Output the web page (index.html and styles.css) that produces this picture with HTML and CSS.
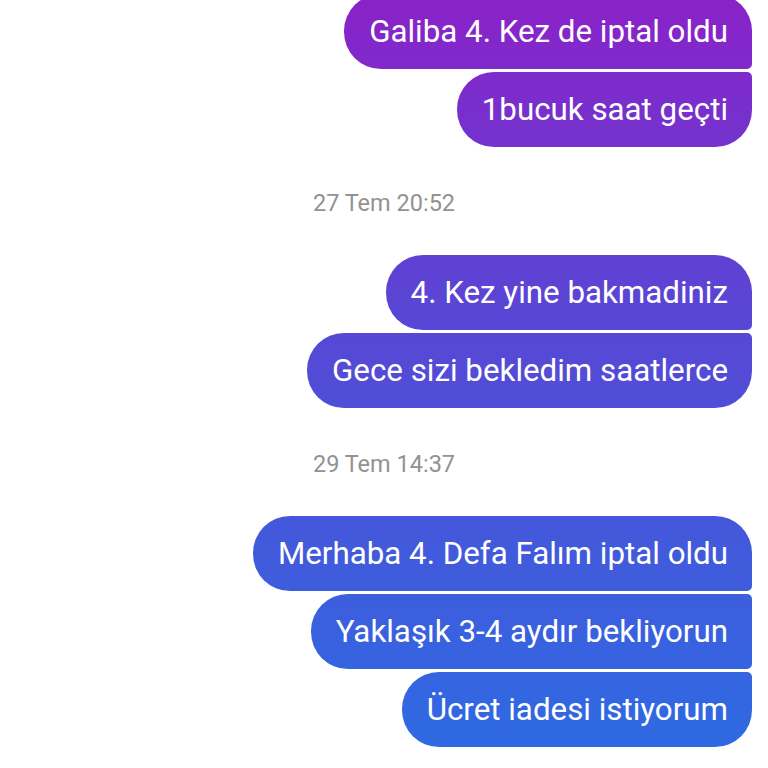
FILE: index.html
```html
<!DOCTYPE html>
<html lang="tr">
<head>
  <meta charset="UTF-8">
  <meta name="viewport" content="width=device-width, initial-scale=1.0">
  <title>Mesajlar</title>
  <link rel="stylesheet" href="styles.css">
</head>
<body>
  <div class="chat">
    <div class="group">
      <div class="msg first">Galiba 4. Kez de iptal oldu</div>
      <div class="msg last">1bucuk saat geçti</div>
    </div>

    <div class="stamp">27 Tem 20:52</div>

    <div class="group">
      <div class="msg first">4. Kez yine bakmadiniz</div>
      <div class="msg last">Gece sizi bekledim saatlerce</div>
    </div>

    <div class="stamp">29 Tem 14:37</div>

    <div class="group">
      <div class="msg first">Merhaba 4. Defa Falım iptal oldu</div>
      <div class="msg">Yaklaşık 3-4 aydır bekliyorun</div>
      <div class="msg last">Ücret iadesi istiyorum</div>
    </div>
  </div>
</body>
</html>
```

FILE: styles.css
```css
body {
  margin: 0;
  background: #ffffff;
  font-family: Roboto, "Noto Sans", sans-serif;
  overflow: hidden;
}

.chat {
  display: flex;
  flex-direction: column;
  margin-top: -6px;
  padding-right: 16px;
}

.group {
  display: flex;
  flex-direction: column;
  align-items: flex-end;
  gap: 3px;
}

.msg {
  height: 75px;
  box-sizing: border-box;
  padding: 0 24px 0 25px;
  line-height: 75px;
  font-size: 31.3px;
  color: #ffffff;
  white-space: nowrap;
  border-radius: 37px 5px 5px 37px;
  background: linear-gradient(to bottom, #8a22c8 0px, #5a45d4 300px, #2c6ce3 768px) fixed;
}

.msg.first {
  border-top-right-radius: 37px;
}

.msg.last {
  border-bottom-right-radius: 37px;
}

.stamp {
  margin: 41px 0 37px 16px;
  text-align: center;
  line-height: 30px;
  font-size: 23.5px;
  color: #929292;
}
```
